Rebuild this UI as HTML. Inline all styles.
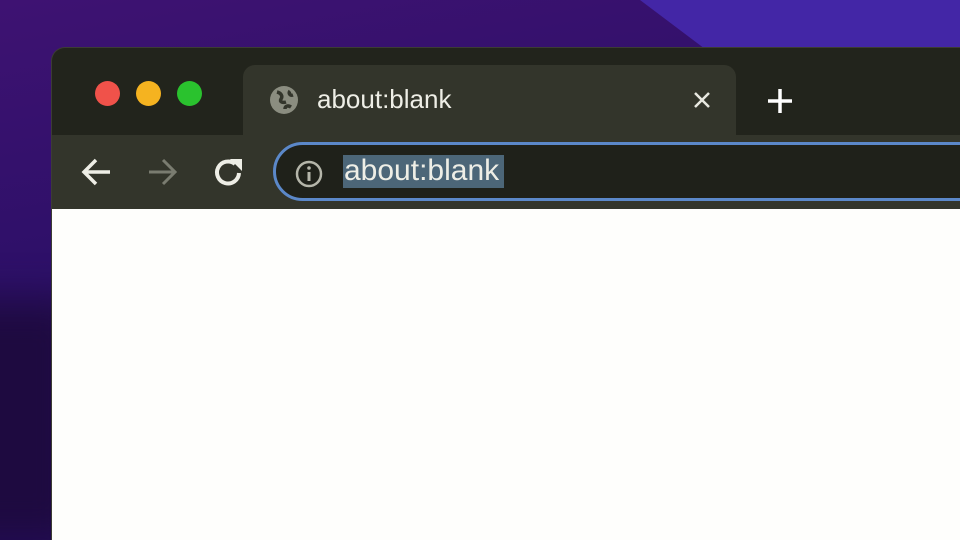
<!DOCTYPE html>
<html><head><meta charset="utf-8"><style>
*{margin:0;padding:0;box-sizing:border-box}
html,body{width:960px;height:540px;overflow:hidden}
body{position:relative;font-family:"Liberation Sans",sans-serif;
background:linear-gradient(170deg,#3e1272 0%,#2d1068 40%,#1e0a50 100%);}
.bg2{position:absolute;left:640px;top:0;width:900px;height:900px;background:#4326a6;transform:rotate(-53deg);transform-origin:0 0;}
.bg3{position:absolute;left:-80px;top:300px;width:160px;height:240px;background:#1e0a40;filter:blur(20px)}
.win{position:absolute;left:51px;top:47px;width:909px;height:493px;border-radius:14px 0 0 0;overflow:hidden;background:#22241c;border:1px solid #3c3c34;border-right:0;border-bottom:0}
.tab{position:absolute;left:191px;top:17px;width:493px;height:80px;background:#33352b;border-radius:12px 12px 0 0;}
.tb{position:absolute;left:0;top:87px;width:909px;height:74px;background:#33352b;}
.content{position:absolute;left:0;top:161px;width:909px;height:332px;background:#fefefc;}
.dot{position:absolute;top:33px;width:25px;height:25px;border-radius:50%}
.omni{position:absolute;left:221px;top:94px;width:720px;height:59px;border:3px solid #5b88c9;border-radius:30px;background:#1f211a;}
.sel{position:absolute;left:291px;top:107px;width:161px;height:33px;background:#4c6678;}
.t{position:absolute;color:#eeeee6;font-size:26px;white-space:nowrap}
</style></head><body>
<div class="bg2"></div><div class="bg3"></div>
<div class="win">
 <div class="tab"></div>
 <div class="tb"></div>
 <div class="dot" style="left:43px;background:#f0524a"></div>
 <div class="dot" style="left:84px;background:#f5b320"></div>
 <div class="dot" style="left:125px;background:#2ac22e"></div>
 <svg style="position:absolute;left:217px;top:37px" width="30" height="30" viewBox="0 0 30 30"><circle cx="15" cy="15" r="14" fill="#8b8d80"/><path d="M8 7c4 1 6 4 4 7s2 4 5 3M22 22c-3-2-6-1-6 2M21 6c-2 2 0 5 3 4" stroke="#33352b" stroke-width="3.5" fill="none"/></svg>
 <div class="t" style="left:265px;top:36px">about:blank</div>
 <svg style="position:absolute;left:641px;top:43px" width="18" height="18"><path d="M2 2L16 16M16 2L2 16" stroke="#e8e8e0" stroke-width="2.5"/></svg>
 <svg style="position:absolute;left:714px;top:39px" width="28" height="28"><path d="M14 2V26M2 14H26" stroke="#fff" stroke-width="3.5"/></svg>
 <svg style="position:absolute;left:28px;top:108px" width="34" height="32"><path d="M30 16H5M16 4L4 16L16 28" stroke="#eeeee6" stroke-width="3.5" fill="none"/></svg>
 <svg style="position:absolute;left:94px;top:108px" width="34" height="32"><path d="M3 16H28M17 4L29 16L17 28" stroke="#7a7c70" stroke-width="3" fill="none"/></svg>
 <svg style="position:absolute;left:160px;top:108px" width="34" height="32"><path d="M27 17A11 11 0 1 1 23 8" stroke="#eeeee6" stroke-width="4" fill="none"/><path d="M18 3H30V15Z" fill="#eeeee6"/></svg>
 <div class="omni"></div>
 <svg style="position:absolute;left:242px;top:111px" width="30" height="30"><circle cx="15" cy="15" r="12" stroke="#b5b6aa" stroke-width="2.5" fill="none"/><path d="M15 13V22" stroke="#b5b6aa" stroke-width="3"/><circle cx="15" cy="9" r="1.8" fill="#b5b6aa"/></svg>
 <div class="sel"></div>
 <div class="t" style="left:292px;top:106px;font-size:30px">about:blank</div>
 <div class="content"></div>
</div>
</body></html>
